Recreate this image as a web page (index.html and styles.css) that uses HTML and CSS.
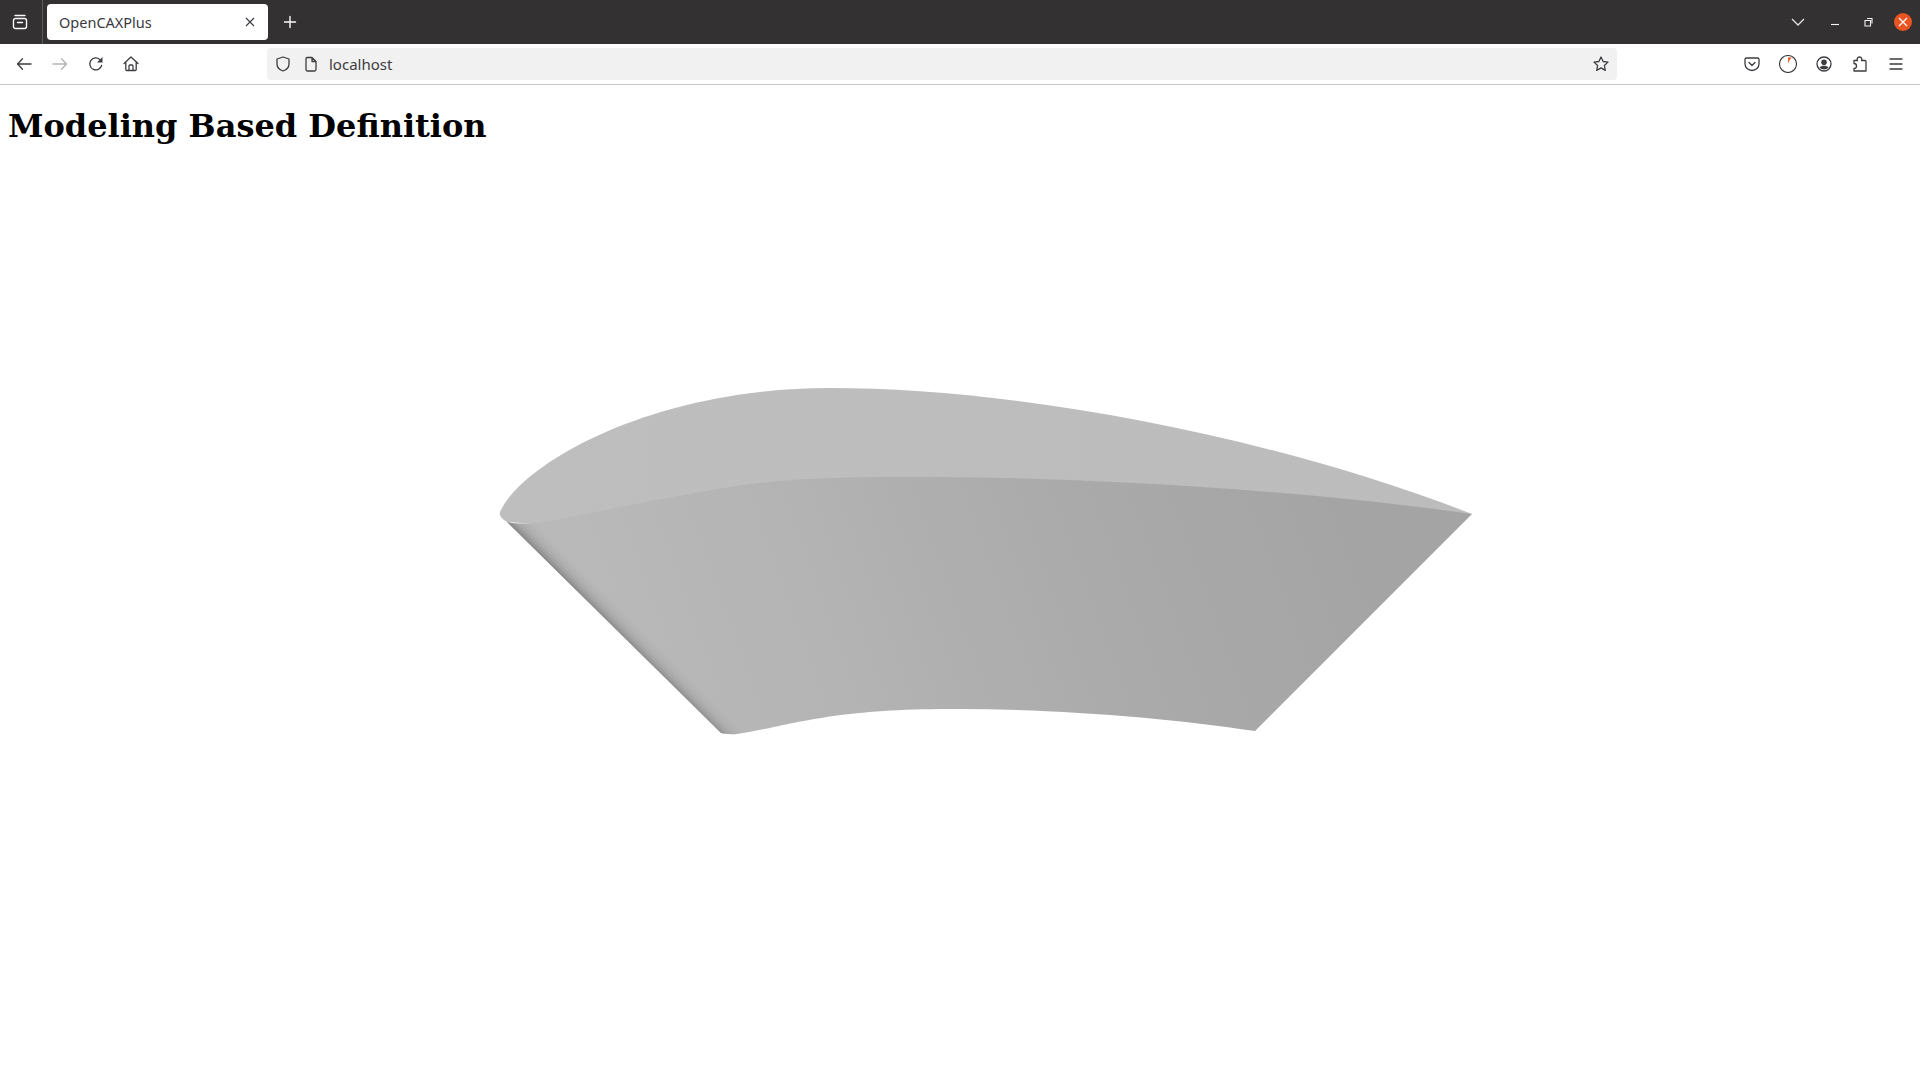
FILE: index.html
```html
<!DOCTYPE html>
<html lang="en">
<head>
    <meta charset="UTF-8">
    <title>OpenCAXPlus</title>
    <link rel="stylesheet" href="styles.css">
</head>
<body>
<div class="tabbar">
    <div class="tab-list-btn">
        <svg class="icon" viewBox="0 0 16 16"><path class="line" d="M3 1.500h10M1.500 6.500a2 2 0 0 1 2-2h9a2 2 0 0 1 2 2v6a2 2 0 0 1-2 2h-9a2 2 0 0 1-2-2zM5.500 8.500h5"/></svg>
    </div>
    <div class="tab">
        <span class="tab-title">OpenCAXPlus</span>
        <svg class="tab-close" viewBox="0 0 10 10"><path d="M1 1l8 8M9 1l-8 8"/></svg>
    </div>
    <div class="new-tab">
        <svg class="icon" viewBox="0 0 16 16"><path class="line" d="M8 2.500v11M2.500 8h11"/></svg>
    </div>
    <div class="win-btns">
        <svg class="chevron" viewBox="0 0 14 8"><path d="M1 1l6 6 6-6"/></svg>
        <svg class="win-icon win-min" viewBox="0 0 10 10"><path d="M1 7.500h8"/></svg>
        <svg class="win-icon win-restore" viewBox="0 0 10 10"><path d="M2 3.500h5.500V9H2zM4 1.500h5v5"/></svg>
        <div class="win-close">
            <svg class="win-icon" viewBox="0 0 10 10"><path d="M1 1l8 8M9 1l-8 8"/></svg>
        </div>
    </div>
</div>
<div class="toolbar">
    <div class="nav-btns">
        <div class="btn"><svg class="icon" viewBox="0 0 16 16"><path class="dark" d="M15 8H1.500M6.500 2.800L1.500 8l5 5.200"/></svg></div>
        <div class="btn"><svg class="icon" viewBox="0 0 16 16"><path class="dim" d="M1 8h13.500M9.500 2.800l5 5.200-5 5.200"/></svg></div>
        <div class="btn"><svg class="icon" viewBox="0 0 16 16"><path class="dark" d="M13.600 9.500A6 6 0 1 1 11.800 3.400"/><path class="solid" d="M14.500 1v5.500H9z"/></svg></div>
        <div class="btn home-btn"><svg class="icon" viewBox="0 0 16 16"><path class="dark" d="M1 7.500L8 1l7 6.500M2.800 6v7.500a1 1 0 0 0 1 1h8.400a1 1 0 0 0 1-1V6M6 14.500V10a1 1 0 0 1 1-1h2a1 1 0 0 1 1 1v4.500"/></svg></div>
    </div>
    <div class="urlbar">
        <svg class="icon" viewBox="0 0 16 16"><path class="dark" d="M8 1l6 2v5c0 3.500-2.500 5.800-6 7-3.500-1.200-6-3.500-6-7V3z"/></svg>
        <svg class="icon page-icon" viewBox="0 0 16 16"><path class="dark" d="M3 2.500a1 1 0 0 1 1-1h5l4 4v8a1.500 1.500 0 0 1-1.500 1.500h-7A1.500 1.500 0 0 1 3 13.500zM9 1.500v4h4"/></svg>
        <span class="url">localhost</span>
        <svg class="icon star" viewBox="0 0 16 16"><path class="dark" d="M8 1l2.100 4.500 4.900.6-3.600 3.400.9 4.900L8 11.900l-4.300 2.500.9-4.900L1 6.100l4.900-.6z"/></svg>
    </div>
    <div class="action-btns">
        <div class="btn"><svg class="icon" viewBox="0 0 16 16"><path class="dark" d="M2.500 2h11A1.500 1.500 0 0 1 15 3.500V8a7 6.500 0 0 1-14 0V3.500A1.500 1.500 0 0 1 2.500 2zM5 6.500l3 3 3-3"/></svg></div>
        <div class="btn"><svg class="icon timer" viewBox="0 0 18 18"><circle class="dark" cx="9" cy="9" r="8.500"/><path class="flag" d="M9 2.500h3.800L10.600 5l-.5 1.200L9 8.200z"/></svg></div>
        <div class="btn"><svg class="icon" viewBox="0 0 16 16"><circle class="dark" cx="8" cy="8" r="7"/><circle class="solid" cx="8" cy="6.200" r="2.800"/><path class="solid" d="M3.500 11.500c1-1.300 2.500-1.800 4.500-1.800s3.500.5 4.500 1.800c-1 1.200-2.500 2-4.500 2s-3.500-.8-4.500-2z"/></svg></div>
        <div class="btn"><svg class="icon" viewBox="0 0 16 16"><path class="dark" d="M2 4.500h3.500C5 3.800 5 3 5.300 2.300 5.700 1.500 6.400 1 7.500 1s1.800.5 2.200 1.300c.3.700.3 1.500-.2 2.200H13a1 1 0 0 1 1 1V15H2v-2.500c1.200 0 2.500-.6 2.500-2.500S3.200 7.500 2 7.500z"/></svg></div>
        <div class="btn"><svg class="icon" viewBox="0 0 16 16"><path class="dark" d="M2 3h12M2 8h12M2 13h12"/></svg></div>
    </div>
</div>

<div class="page">
    <h1>Modeling Based Definition</h1>
</div>

<!-- viewBox uses page coordinates so the model can be read against the screenshot -->
<svg class="model" viewBox="0 165 1920 915">
    <defs>
        <linearGradient id="topFace" gradientUnits="userSpaceOnUse" x1="500" y1="500" x2="1470" y2="450">
            <stop offset="0" stop-color="#bebebe"/>
            <stop offset="1" stop-color="#bcbcbc"/>
        </linearGradient>
        <linearGradient id="frontFace" gradientUnits="userSpaceOnUse" x1="640" y1="720" x2="1330" y2="470">
            <stop offset="0" stop-color="#b9b9b9"/>
            <stop offset="0.3" stop-color="#b3b3b3"/>
            <stop offset="0.6" stop-color="#ababab"/>
            <stop offset="1" stop-color="#a4a4a4"/>
        </linearGradient>
        <!-- shading along the left silhouette, fades out a few px inside -->
        <linearGradient id="edgeShade" gradientUnits="userSpaceOnUse" x1="614" y1="628" x2="629" y2="613">
            <stop offset="0" stop-color="#7e7e7e" stop-opacity="0.8"/>
            <stop offset="0.35" stop-color="#959595" stop-opacity="0.4"/>
            <stop offset="1" stop-color="#b6b6b6" stop-opacity="0"/>
        </linearGradient>
    </defs>
    <path fill="url(#topFace)" d="M507 522C502 519 499 516 500 512C520 465 650 388 830 388C1010 388 1260 432 1472 514L1000 560z"/>
    <path fill="url(#frontFace)" d="M507 522C512 523.500 522 524 535 523C565 520 620 505 730 487C775 479.600 830 477 900 477C1050 476 1280 487 1472 514L1255 731C1170 718 1060 709 960 709C830 708 790 726 737 734C730 734.500 725 734 721 733z"/>
    <path fill="url(#edgeShade)" d="M507 522C512 523.500 522 524 535 523L800 700L737 734C730 734.500 725 734 721 733z"/>
</svg>
</body>
</html>
```

FILE: styles.css
```css
*{
    box-sizing: border-box;
}
body{
    margin: 0;
    background: #fff;
    height: 1080px;
    overflow: hidden;
}
svg{
    display: block;
    fill: none;
}
.icon{
    width: 16px;
    height: 16px;
    flex: none;
}
.line{
    stroke: #fbfbfe;
    stroke-width: 1.4;
    stroke-linecap: round;
    stroke-linejoin: round;
}
.dark{
    stroke: #3d3c40;
    stroke-width: 1.3;
    stroke-linecap: round;
    stroke-linejoin: round;
    fill: none;
}
.dim{
    stroke: #b4b4b6;
    stroke-width: 1.3;
    stroke-linecap: round;
    stroke-linejoin: round;
}
.solid{
    fill: #3d3c40;
}

/* tab strip */
.tabbar{
    display: flex;
    align-items: center;
    height: 44px;
    background: #333132;
}
.tab-list-btn{
    display: flex;
    align-items: center;
    justify-content: center;
    width: 43px;
    height: 44px;
    padding-right: 3px;
    border-right: 1px solid #5d5c5d;
}
.tab{
    display: flex;
    align-items: center;
    justify-content: space-between;
    width: 221px;
    height: 36px;
    margin-left: 4px;
    padding: 0 13px 0 12px;
    background: #fff;
    border-radius: 4px;
}
.tab-title{
    font: 14.5px "Noto Sans", sans-serif;
    color: #3a3a3f;
}
.tab-close{
    width: 10px;
    height: 10px;
}
.tab-close path{
    stroke: #3a3a3f;
    stroke-width: 1.1;
}
.new-tab{
    display: flex;
    margin-left: 14px;
}
.win-btns{
    display: flex;
    align-items: center;
    margin-left: auto;
    padding-right: 8px;
}
.chevron{
    width: 14px;
    height: 8px;
    margin-right: 25px;
}
.chevron path{
    stroke: #e4e4e4;
    stroke-width: 1.3;
}
.win-icon{
    width: 10px;
    height: 10px;
}
.win-icon path{
    stroke: #f4f4f4;
    stroke-width: 1.1;
}
.win-min{
    margin-right: 23px;
}
.win-restore{
    margin-right: 21px;
}
.win-close{
    display: flex;
    align-items: center;
    justify-content: center;
    width: 18px;
    height: 18px;
    border-radius: 50%;
    background: #e95420;
}
.win-close path{
    stroke-width: 1.4;
}

/* nav bar */
.toolbar{
    display: flex;
    align-items: center;
    height: 41px;
    padding: 4px 6px;
    background: #fff;
    border-bottom: 1px solid #c8c8c9;
}
.nav-btns,
.action-btns{
    display: flex;
}
.btn{
    display: flex;
    align-items: center;
    justify-content: center;
    width: 36px;
    height: 32px;
}
.home-btn{
    width: 34px;
}
.urlbar{
    display: flex;
    align-items: center;
    width: 1350px;
    height: 32px;
    margin-left: 119px;
    padding: 0 8px;
    border-radius: 4px;
    background: #f1f1f1;
}
.page-icon{
    margin-left: 12px;
}
.url{
    margin-left: 10px;
    font: 15px "Noto Sans", sans-serif;
    color: #3d3c40;
}
.star{
    margin-left: auto;
}
.action-btns{
    margin-left: auto;
}
.timer{
    width: 18px;
    height: 18px;
}
.timer .dark{
    stroke-width: 1.1;
}
.flag{
    fill: #ee5a24;
}

/* page content */
.page{
    padding: 0 8px;
}
h1{
    margin: 0;
    padding: 22px 0 20px;
    font: bold 32px/38px "DejaVu Serif", serif;
    color: #000;
}
.model{
    width: 1920px;
    height: 915px;
}
```
